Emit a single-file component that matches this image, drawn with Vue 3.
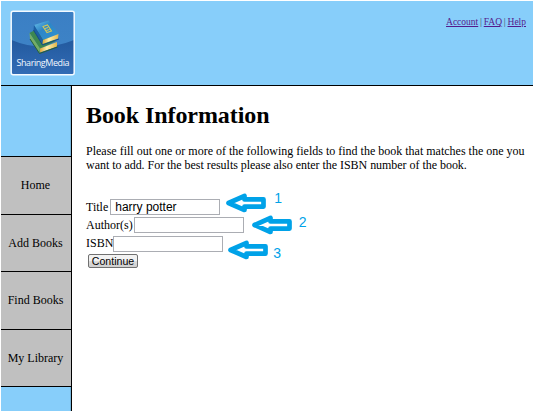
<script setup>
const nav = ['Home', 'Add Books', 'Find Books', 'My Library']
const fields = [
  { label: 'Title', value: 'harry potter', cls: 'one', n: 1 },
  { label: 'Author(s)', value: '', cls: 'two', n: 2 },
  { label: 'ISBN', value: '', cls: 'three', n: 3 }
]
</script>

<template>
  <div class="page">
    <header class="header">
      <svg class="logo" viewBox="0 0 66 66">
        <defs>
          <linearGradient id="bg" x1="0" y1="0" x2="0" y2="1">
            <stop offset="0" stop-color="#3b7fc4" />
            <stop offset="1" stop-color="#3f86c8" />
          </linearGradient>
          <linearGradient id="low" x1="0" y1="0" x2="0" y2="1">
            <stop offset="0" stop-color="#235a9f" />
            <stop offset="1" stop-color="#326cb5" />
          </linearGradient>
          <linearGradient id="cover" x1="0" y1="0" x2="1" y2="1">
            <stop offset="0" stop-color="#6fc4ea" />
            <stop offset=".4" stop-color="#2d86c8" />
            <stop offset="1" stop-color="#2f93cf" />
          </linearGradient>
          <linearGradient id="paper" x1="0" y1="0" x2="1" y2="0">
            <stop offset="0" stop-color="#d9a53c" />
            <stop offset=".4" stop-color="#fff0a8" />
            <stop offset="1" stop-color="#e3b74c" />
          </linearGradient>
        </defs>
        <rect x="1.2" y="1.2" width="63" height="63.5" rx="2" fill="url(#bg)" />
        <path d="M1.5 30Q32 43 64 30V64.5H1.5Z" fill="url(#low)" />
        <rect x="1.2" y="1.2" width="63" height="63.5" rx="2" fill="none" stroke="#f4faff" stroke-width="1.5" />
        <path d="M19.5 23L25 20L46 31L30 39Z" fill="#3c8750" />
        <path d="M19.5 23L30 38.500L29.500 43.500L20 29Z" fill="#74ad67" />
        <path d="M30 38.500L47 32V36.500L30 42.500Z" fill="url(#paper)" />
        <path d="M20 29L29.500 43.500L47.500 37" fill="none" stroke="#285f36" stroke-width="1" />
        <path d="M24 15L38.500 10.500L49 24L33 30Z" fill="url(#cover)" />
        <path d="M24 15L33 30L32.500 35L23.500 20Z" fill="#1c60a4" />
        <path d="M33 30L48.500 24L48 28.500L32.500 34Z" fill="url(#paper)" />
        <path d="M23.500 20L32.500 35L49 29" fill="none" stroke="#174b87" stroke-width="1" />
        <path d="M33 16.500L37.500 15L41.500 21L37 22.500ZM35 18.500L38 17.500M36.500 20.500L39.500 19.500" fill="none" stroke="#cfc75c" stroke-width="1.1" />
        <text x="33" y="55.5" text-anchor="middle" textLength="53" fill="#f1f7ff">SharingMedia</text>
      </svg>
      <div class="links"><a>Account</a><i>|</i><a>FAQ</a><i>|</i><a>Help</a></div>
    </header>
    <div class="body">
      <nav class="side"><div v-for="item in nav" :key="item" class="item">{{ item }}</div></nav>
      <main class="main">
        <h1>Book Information</h1>
        <p>Please fill out one or more of the following fields to find the book that matches the one you<br /><span class="second">want to add. For the best results please also enter the ISBN number of the book.</span></p>
        <form class="form" @submit.prevent>
          <div v-for="f in fields" :key="f.n" class="row" :class="f.cls">
            <label>{{ f.label }}</label><input type="text" :value="f.value" />
            <svg class="arrow" viewBox="0 0 42 20"><path d="M3.500 10L19.500 3V6.400H38.500V13.600H19.500V17Z" fill="#fff" stroke="#00a2e8" stroke-width="4.7" stroke-linejoin="round" /></svg>
            <span class="num">{{ f.n }}</span>
          </div>
          <button>Continue</button>
        </form>
      </main>
    </div>
  </div>
</template>

<style>
body { margin: 0; overflow: hidden; }
</style>
<style scoped>
.page { box-sizing: border-box; width: 534px; height: 411px; padding: 1px 0 0 1px; background: #fff; display: flex; flex-direction: column; font-family: "Liberation Serif", serif; font-size: 12px; color: #000; }
.header { box-sizing: border-box; width: 532px; height: 85px; background: #87cefa; border-bottom: 1px solid #000; display: flex; justify-content: space-between; padding: 9px 7px 0 9px; }
.logo { width: 66px; height: 66px; }
.logo text { font-family: "Open Sans", sans-serif; font-size: 9px; }
.links { display: flex; font-size: 9.5px; line-height: 12px; padding-top: 6px; white-space: nowrap; color: #445; }
.links a { color: #551a8b; text-decoration: underline; }
.links i { font-style: normal; width: 5.5px; text-align: center; }
.body { flex: 1; display: flex; }
.side { box-sizing: border-box; width: 71px; background: #87cefa; border-right: 1px solid #000; padding-top: 70px; box-shadow: inset -1px 0 0 rgba(0, 0, 0, .12); }
.item { box-sizing: border-box; height: 57.5px; border-top: 1px solid #000; background: #c0c0c0; display: flex; align-items: center; justify-content: center; padding: 1px 1px 0 0; }
.item:last-child { height: 58.5px; border-bottom: 1px solid #000; }
.main { flex: 1; padding: 14px 0 0 14px; }
h1 { margin: 0; font-size: 24px; line-height: 30px; white-space: nowrap; letter-spacing: -.08px; }
p { margin: 14px 0 0; line-height: 14px; white-space: nowrap; }
.second { letter-spacing: -.035px; }
.form { margin-top: 26px; }
.row { display: flex; align-items: center; height: 18.3px; }
label { white-space: nowrap; }
input { box-sizing: border-box; width: 110px; height: 16px; border: 1px solid #abadb3; margin: 0 0 0 1px; padding: 0 4px 1px; font: 12px "Liberation Sans", sans-serif; color: #000; background: #fff; }
.arrow { width: 42px; height: 20px; flex: none; }
.num { font: 14px "Liberation Sans", sans-serif; color: #00a2e8; }
.one input { margin-left: 2px; }
.three input { margin-left: 0; }
.one .arrow { margin: -8px 0 0 5px; }
.one .num { margin: -18px 0 0 7px; }
.two .arrow { margin: 0 0 0 7px; }
.two .num { margin: -6px 0 0 6px; }
.three .arrow { margin: 12px 0 0 4px; }
.three .num { margin: 18px 0 0 4px; }
button { display: block; box-sizing: border-box; width: 50px; height: 14px; margin: 1.6px 0 0 2px; padding: 0; border: 1px solid #707070; border-radius: 2px; background: linear-gradient(#f2f2f2 50%, #ddd 50%, #cfcfcf); font: 10.6px/12px "Liberation Sans", sans-serif; color: #000; }
</style>
